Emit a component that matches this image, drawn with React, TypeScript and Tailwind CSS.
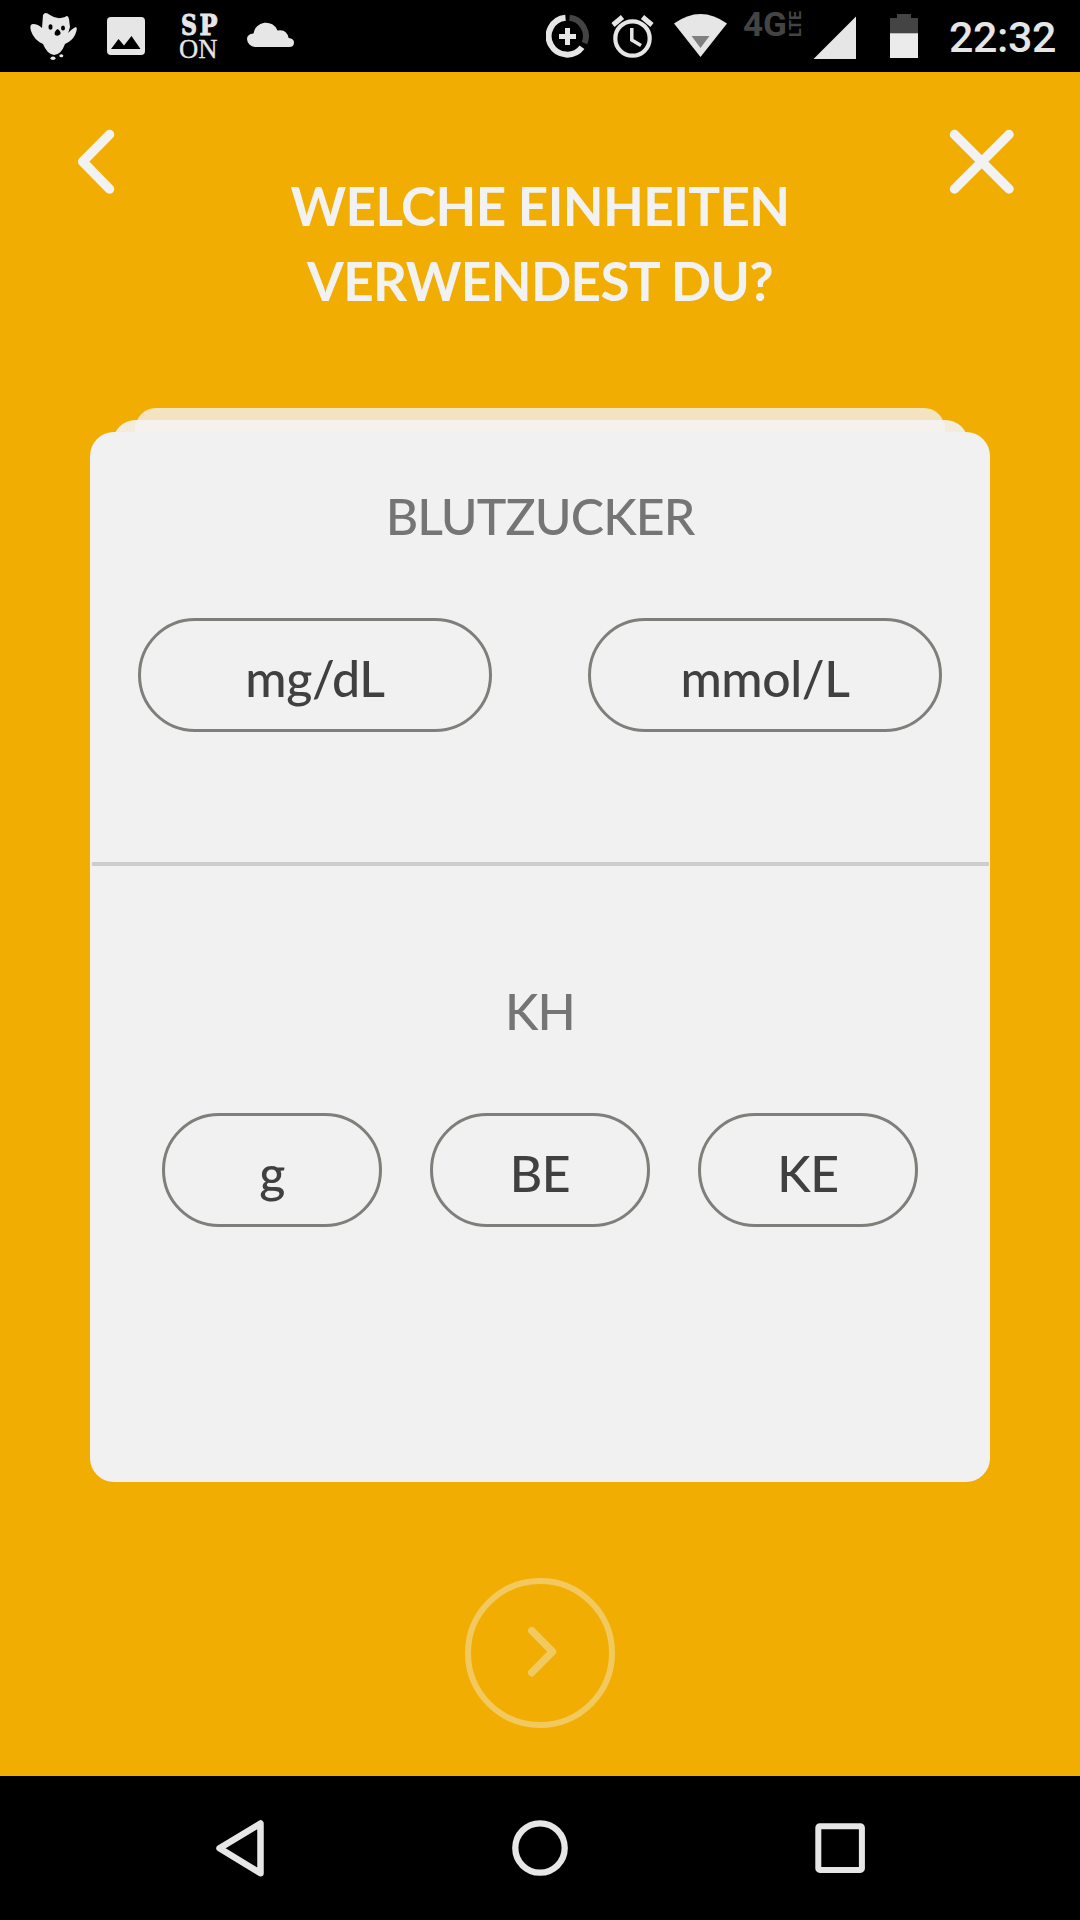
import type { ReactNode } from "react";

const INK = "#e6e6e6";

function StatusBar() {
  return (
    <div className="flex h-[72px] shrink-0 items-start bg-black">
      <svg className="ml-[28px] h-[72px] w-[52px]" viewBox="28 0 52 72">
        <path
          fill={INK}
          d="M43 15Q45 11 50 15Q57 20 65 17Q68 14 69 19L70 27Q69 31 68 33Q73 28 76 27Q78 28 75 35Q72 41 65 44Q61 55 54 55Q47 54 43 44Q34 40 31 31Q29 24 33 24Q38 24 42 28Z"
        />
        <ellipse cx="50.5" cy="27" rx="2" ry="2.8" fill="#000" />
        <ellipse cx="63" cy="28" rx="2" ry="2.6" fill="#000" />
        <path d="M57.5 29Q61 31 60.5 34Q58 37 55 35Q53.5 32 57.5 29Z" fill="#000" />
        <ellipse cx="53" cy="58.3" rx="2.5" ry="1.8" fill={INK} />
        <ellipse cx="61.3" cy="55.8" rx="2" ry="1.5" fill={INK} />
      </svg>
      <svg className="ml-[27px] h-[72px] w-[38px]" viewBox="107 0 38 72">
        <rect x="107" y="17" width="38" height="38" rx="4" fill={INK} />
        <path d="M111 49L118.5 39L124 45.5L131.500 36L140.500 49Z" fill="#000" />
      </svg>
      <svg className="ml-[33px] h-[72px] w-[42px]" viewBox="178 0 42 72">
        <g fill={INK}>
          <g fontFamily="DejaVu Serif" fontWeight="700" fontSize="27.500" stroke={INK} strokeWidth="1">
            <text x="181" y="34.500" textLength="16" lengthAdjust="spacingAndGlyphs">S</text>
            <text x="199.500" y="34.500" textLength="18" lengthAdjust="spacingAndGlyphs">P</text>
          </g>
          <text x="179" y="58.300" fontFamily="Liberation Serif" fontSize="27" stroke={INK} strokeWidth="0.300" textLength="38.500" lengthAdjust="spacingAndGlyphs">ON</text>
        </g>
      </svg>
      <svg className="ml-[27px] h-[72px] w-[47px]" viewBox="247 0 47 72">
        <path
          fill={INK}
          d="M255 47A8.300 8.300 0 0 1 247 39Q247 34 253.500 33.500A12.500 12.500 0 0 1 277.500 30.500Q286.500 28.500 288.700 38Q294 38.500 294 42.500Q294 47 289 47Z"
        />
      </svg>
      <svg className="ml-[252px] h-[72px] w-[44px]" viewBox="546 0 44 72">
        <path d="M565.500 17.700A18.500 18.500 0 1 0 582 47.200" fill="none" stroke={INK} strokeWidth="6" />
        <path d="M569.500 17.700A18.500 18.500 0 0 1 584.500 43.200" fill="none" stroke="#444" strokeWidth="6" />
        <path d="M567.500 28V45M559 36.500H576" stroke={INK} strokeWidth="5" />
      </svg>
      <svg className="ml-[21px] h-[72px] w-[44px]" viewBox="611 0 44 72">
        <circle cx="632.500" cy="38.500" r="17.200" fill="none" stroke={INK} strokeWidth="4.200" />
        <path d="M631.800 28V40L641 45.500" fill="none" stroke={INK} strokeWidth="3.500" />
        <path d="M613 25L622.500 17M652 25L642.500 17" stroke={INK} strokeWidth="5" />
      </svg>
      <svg className="ml-[18px] h-[72px] w-[56px]" viewBox="673 0 56 72">
        <path d="M674 23.500Q700.500 4.500 727 23.500L700.500 57Z" fill={INK} />
        <path d="M691.500 36H709.500L700.500 48Z" fill="#808080" />
      </svg>
      <svg className="ml-[13px] h-[72px] w-[62px]" viewBox="742 0 62 72">
        <g fill="#444" fontFamily="Roboto">
          <text x="743" y="35.500" fontWeight="700" fontSize="33" textLength="44" lengthAdjust="spacingAndGlyphs">4G</text>
          <text transform="translate(801 37) rotate(-90)" fontWeight="700" fontSize="16.500" textLength="26" lengthAdjust="spacingAndGlyphs">LTE</text>
        </g>
      </svg>
      <svg className="ml-[9px] h-[72px] w-[43px]" viewBox="813 0 43 72">
        <path d="M813.500 59L856 16.500V59Z" fill={INK} />
      </svg>
      <svg className="ml-[34px] h-[72px] w-[28px]" viewBox="890 0 28 72">
        <path d="M890 18H897V14H911V18H918V34H890Z" fill="#444" />
        <rect x="890" y="33.300" width="28" height="24.700" fill="#ebebeb" />
      </svg>
      <span className="ml-[31px] font-['Roboto'] text-[43px] leading-[74px] font-medium tracking-[-0.4px] text-[#e6e6e6]">22:32</span>
    </div>
  );
}

function Pill({ className, children }: { className: string; children: ReactNode }) {
  return (
    <button
      className={`flex h-[114px] items-center justify-center rounded-full border-[3px] border-[#7f7e7a] pt-[6px] font-medium tracking-[-0.4px] text-[#404040] ${className}`}
    >
      {children}
    </button>
  );
}

export default function App() {
  return (
    <div className="flex h-[1920px] w-[1080px] flex-col overflow-hidden bg-[#f1ad01] font-['Lato',sans-serif]">
      <StatusBar />

      <header className="flex h-[336px] shrink-0 items-start justify-between px-[64px] text-[#f2f2f2]">
        <button className="mt-[50px] w-[80px]" aria-label="Zurück">
          <svg className="h-[80px] w-[80px]" viewBox="64 122 80 80">
            <path d="M109.500 134.500L82.700 161.700L109.500 189" fill="none" stroke="currentColor" strokeWidth="9.500" strokeLinecap="round" strokeLinejoin="round" />
          </svg>
        </button>
        <h1 className="flex flex-col items-center pt-[96px] text-[53px] leading-[75px] font-bold tracking-[-0.6px] whitespace-nowrap">
          <span>WELCHE EINHEITEN</span>
          <span>VERWENDEST DU?</span>
        </h1>
        <button className="mt-[50px] w-[80px]" aria-label="Schließen">
          <svg className="h-[80px] w-[80px]" viewBox="936 122 80 80">
            <path d="M954.500 134.500L1009 189M1009 134.500L954.500 189" fill="none" stroke="currentColor" strokeWidth="9.500" strokeLinecap="round" />
          </svg>
        </button>
      </header>

      <main className="relative mx-[90px] shrink-0 pt-[24px]">
        <div className="absolute top-0 right-[45px] left-[45px] h-[60px] rounded-t-[21px] bg-[#f3e3c1]" />
        <div className="absolute top-[12px] right-[22.5px] left-[22.5px] h-[60px] rounded-t-[22.5px] bg-[#f5f2f2]/90" />
        <div className="relative h-[1050px] rounded-[24px] bg-[#f1f1f1] text-[50px]">
          <section className="flex h-[430px] flex-col items-center pt-[54px]">
            <h2 className="leading-[60px] font-medium tracking-[-0.9px] text-[#757575]">BLUTZUCKER</h2>
            <div className="mt-[72px] flex gap-[96px]">
              <Pill className="w-[354px]">mg/dL</Pill>
              <Pill className="w-[354px]">mmol/L</Pill>
            </div>
          </section>
          <hr className="mx-[1.5px] h-[4px] border-0 bg-[#cdcdcd]" />
          <section className="flex flex-col items-center pt-[115px]">
            <h2 className="leading-[60px] font-medium tracking-[-0.9px] text-[#757575]">KH</h2>
            <div className="mt-[72px] flex gap-[48px]">
              <Pill className="w-[220px]">g</Pill>
              <Pill className="w-[220px]">BE</Pill>
              <Pill className="w-[220px]">KE</Pill>
            </div>
          </section>
        </div>
      </main>

      <div className="flex h-[294px] shrink-0 justify-center pt-[96px]">
        <button className="flex h-[150px] w-[150px] items-center justify-center rounded-full border-[6px] border-[#f2c95f]" aria-label="Weiter">
          <svg className="h-[60px] w-[60px] text-[#f2c95f]" viewBox="510 1623 60 60">
            <path d="M531.700 1630.700L552.500 1651.700L531.700 1672.700" fill="none" stroke="currentColor" strokeWidth="7.500" strokeLinecap="round" strokeLinejoin="round" />
          </svg>
        </button>
      </div>

      <nav className="flex h-[144px] shrink-0 items-center justify-center gap-[240px] bg-black text-[#e6e6e6]">
        <svg className="h-[60px] w-[60px]" viewBox="210 1818 60 60">
          <path d="M219.500 1848.300L260.500 1823.500V1873.200Z" fill="none" stroke="currentColor" strokeWidth="6.500" strokeLinejoin="round" />
        </svg>
        <svg className="h-[60px] w-[60px]" viewBox="510 1818 60 60">
          <circle cx="540" cy="1848" r="24.700" fill="none" stroke="currentColor" strokeWidth="6.300" />
        </svg>
        <svg className="h-[60px] w-[60px]" viewBox="810 1818 60 60">
          <rect x="818.300" y="1826.300" width="43.600" height="43.600" rx="1.500" fill="none" stroke="currentColor" strokeWidth="6" />
        </svg>
      </nav>
    </div>
  );
}
